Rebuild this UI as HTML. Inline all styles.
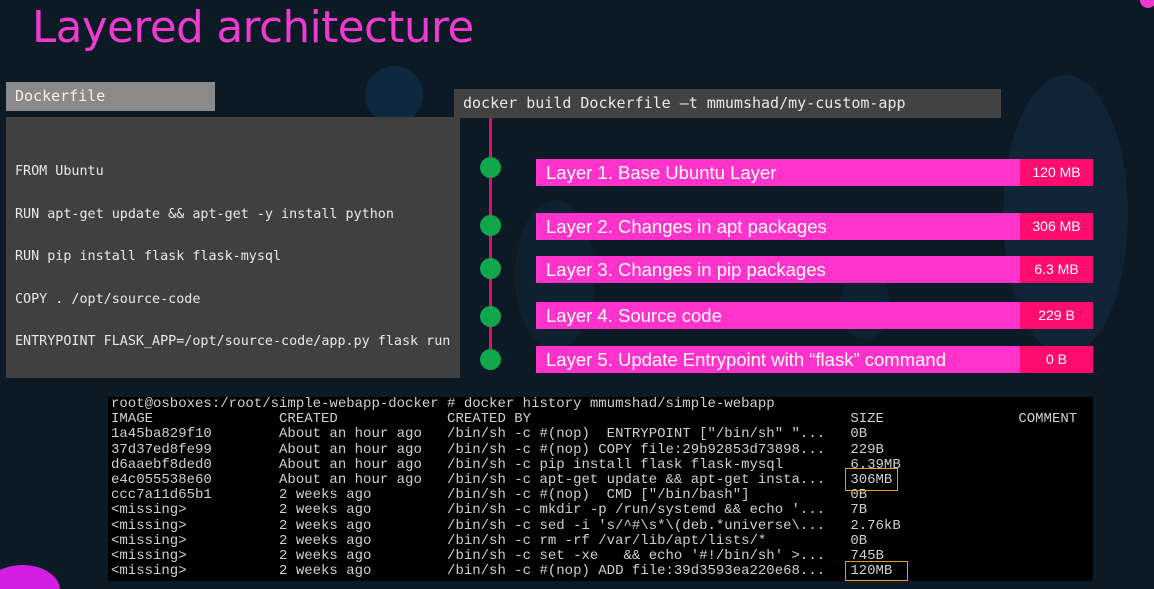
<!DOCTYPE html>
<html><head><meta charset="utf-8"><style>
*{margin:0;padding:0;box-sizing:border-box}
html,body{width:1154px;height:589px;overflow:hidden}
body{background:#0b1a25;position:relative;font-family:"Liberation Sans",sans-serif}
.abs{position:absolute}
.blob{position:absolute;border-radius:50%;background:#0e2535}
h1{position:absolute;left:32px;top:3px;font-weight:normal;font-size:43.5px;color:#ee3ad0;font-family:"DejaVu Sans","Liberation Sans",sans-serif;letter-spacing:-0.5px}
.mono{font-family:"DejaVu Sans Mono","Liberation Mono",monospace}
.code div{position:absolute;left:9px;font-size:13.4px;color:#e8e8e8}
.bar{position:absolute;left:536px;width:557px;height:27px;background:#ff33cc}
.bar span{position:absolute;left:10px;top:3px;font-size:18.5px;color:#fff}
.bar b{position:absolute;right:0;top:0;width:73px;height:100%;background:#ff0d6e;color:#fff;font-weight:normal;font-size:14px;text-align:center;line-height:27px}
.dot{position:absolute;left:480px;width:21px;height:21px;border-radius:50%;background:#10a64c}
.term{position:absolute;left:108px;top:397px;width:985px;height:184px;background:#000;overflow:hidden}
.term pre{font-family:"Liberation Mono",monospace;font-size:14px;line-height:15.2px;color:#d0d0d0;position:absolute;left:3px;top:0px}
.yb{position:absolute;border:1.5px solid #e0a020}
</style></head><body>
<div class="blob" style="left:1003px;top:75px;width:125px;height:280px;background:#0f2436"></div>
<div class="blob" style="left:365px;top:66px;width:58px;height:58px;background:#0e2840"></div>
<div class="blob" style="left:515px;top:200px;width:80px;height:150px;background:#0d2131"></div>
<div class="blob" style="left:840px;top:270px;width:50px;height:70px;background:#0d2131"></div>
<div class="blob" style="left:1140px;top:-8px;width:16px;height:16px;background:#ee3ad0"></div>
<div class="blob" style="left:-15px;top:565px;width:75px;height:50px;background:#d21ee0"></div>
<h1>Layered architecture</h1>
<div class="abs mono" style="left:6px;top:82px;width:209px;height:29px;background:#8a8a8a;color:#f0f0f0;font-size:15px;padding:5px 0 0 9px">Dockerfile</div>
<div class="abs code mono" style="left:6px;top:117px;width:454px;height:261px;background:#404040">
<div style="top:47px">FROM Ubuntu</div>
<div style="top:90px">RUN apt-get update &amp;&amp; apt-get -y install python</div>
<div style="top:132px">RUN pip install flask flask-mysql</div>
<div style="top:175px">COPY . /opt/source-code</div>
<div style="top:217px">ENTRYPOINT FLASK_APP=/opt/source-code/app.py flask run</div>
</div>
<div class="abs mono" style="left:454px;top:89px;width:547px;height:29px;background:#424242;color:#e8e8e8;font-size:15px;padding:5px 0 0 9px">docker build Dockerfile –t mmumshad/my-custom-app</div>
<div class="abs" style="left:489px;top:118px;width:3px;height:250px;background:#e0106a"></div>
<div class="dot" style="top:157px"></div><div class="dot" style="top:215px"></div><div class="dot" style="top:258px"></div><div class="dot" style="top:306px"></div><div class="dot" style="top:349px"></div>
<div class="bar" style="top:159px"><span>Layer 1. Base Ubuntu Layer</span><b>120 MB</b></div>
<div class="bar" style="top:213px"><span>Layer 2. Changes in apt packages</span><b>306 MB</b></div>
<div class="bar" style="top:256px"><span>Layer 3. Changes in pip packages</span><b>6.3 MB</b></div>
<div class="bar" style="top:302px"><span>Layer 4. Source code</span><b>229 B</b></div>
<div class="bar" style="top:346px"><span>Layer 5. Update Entrypoint with “flask” command</span><b>0 B</b></div>
<div class="term"><pre>root@osboxes:/root/simple-webapp-docker # docker history mmumshad/simple-webapp
IMAGE               CREATED             CREATED BY                                      SIZE                COMMENT
1a45ba829f10        About an hour ago   /bin/sh -c #(nop)  ENTRYPOINT ["/bin/sh" "...   0B
37d37ed8fe99        About an hour ago   /bin/sh -c #(nop) COPY file:29b92853d73898...   229B
d6aaebf8ded0        About an hour ago   /bin/sh -c pip install flask flask-mysql        6.39MB
e4c055538e60        About an hour ago   /bin/sh -c apt-get update &amp;&amp; apt-get insta...   306MB
ccc7a11d65b1        2 weeks ago         /bin/sh -c #(nop)  CMD ["/bin/bash"]            0B
&lt;missing&gt;           2 weeks ago         /bin/sh -c mkdir -p /run/systemd &amp;&amp; echo '...   7B
&lt;missing&gt;           2 weeks ago         /bin/sh -c sed -i 's/^#\s*\(deb.*universe\...   2.76kB
&lt;missing&gt;           2 weeks ago         /bin/sh -c rm -rf /var/lib/apt/lists/*          0B
&lt;missing&gt;           2 weeks ago         /bin/sh -c set -xe   &amp;&amp; echo '#!/bin/sh' &gt;...   745B
&lt;missing&gt;           2 weeks ago         /bin/sh -c #(nop) ADD file:39d3593ea220e68...   120MB</pre></div>
<div class="yb" style="left:845px;top:468px;width:53px;height:23px"></div>
<div class="yb" style="left:845px;top:561px;width:63px;height:20px"></div>
</body></html>
